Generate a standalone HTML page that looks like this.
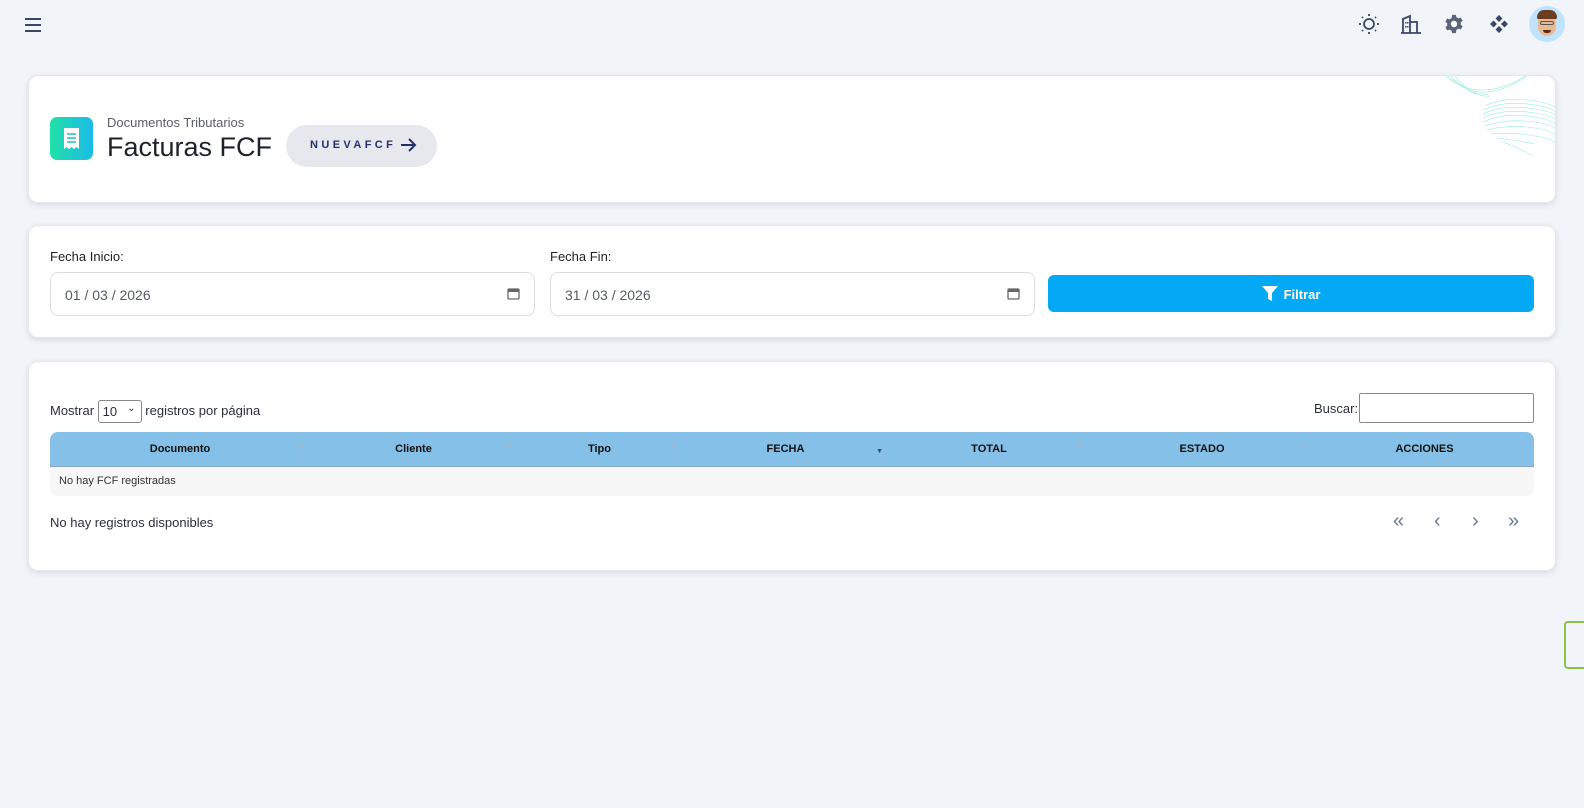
<!DOCTYPE html>
<html style="overflow:hidden;width:1584px;height:808px"><head><meta charset="utf-8">
<style>
*{box-sizing:border-box;margin:0;padding:0}
html,body{overflow:hidden}
body{width:1584px;height:808px;background:#f1f4f8;font-family:"Liberation Sans",sans-serif;color:#2b2f3a;position:relative}
.card{position:absolute;left:28px;width:1528px;background:#fff;border-radius:10px;box-shadow:0 2px 6px rgba(30,40,70,.12);border:1px solid #e3e6ec}
.ic{position:absolute;top:13px}
.inp{position:absolute;top:272px;height:44px;border:1px solid #d9dde3;border-radius:8px;background:#fff;font-size:14px;color:#555b66;padding:14px 0 0 14px}
.cal{position:absolute;right:14px;top:14px}
.lbl{position:absolute;top:249px;font-size:13px;color:#222}
th{font-size:11px;font-weight:bold;color:#111;height:34px;position:relative}
.so{position:absolute;right:6px;top:11px;font-size:7px;line-height:6px;color:#9bb8d0}
</style></head><body>
<svg style="position:absolute;left:24px;top:17px" width="18" height="15"><g stroke="#3a4666" stroke-width="2"><line x1="1" y1="2" x2="17" y2="2"/><line x1="1" y1="8" x2="17" y2="8"/><line x1="1" y1="14" x2="17" y2="14"/></g></svg>
<svg class="ic" style="left:1358px" width="22" height="22" viewBox="0 0 22 22"><circle cx="11" cy="11" r="5" fill="none" stroke="#3a4666" stroke-width="1.8"/><g stroke="#3a4666" stroke-width="1.8"><line x1="11" y1="1" x2="11" y2="3"/><line x1="11" y1="19" x2="11" y2="21"/><line x1="1" y1="11" x2="3" y2="11"/><line x1="19" y1="11" x2="21" y2="11"/><line x1="4" y1="4" x2="5" y2="5"/><line x1="17" y1="17" x2="18" y2="18"/><line x1="4" y1="18" x2="5" y2="17"/><line x1="17" y1="5" x2="18" y2="4"/></g></svg>
<svg class="ic" style="left:1400px" width="22" height="22" viewBox="0 0 22 22"><g fill="none" stroke="#3a4666" stroke-width="1.8"><path d="M1 20H21M3 20V6L10 3V20M10 9H17V20"/></g><g fill="#3a4666"><rect x="5" y="9" width="1.5" height="1.5"/><rect x="7" y="9" width="1.5" height="1.5"/><rect x="5" y="13" width="1.5" height="1.5"/><rect x="7" y="13" width="1.5" height="1.5"/></g></svg>
<svg class="ic" style="left:1443px" width="22" height="22" viewBox="0 0 24 24"><path d="M10 2h4l.6 2.6 2.3 1.3 2.5-.9 2 3.4-2 1.8v2.6l2 1.8-2 3.4-2.5-.9-2.3 1.3L14 22h-4l-.6-2.6-2.3-1.3-2.5.9-2-3.4 2-1.8V11.2l-2-1.8 2-3.4 2.5.9 2.3-1.3z" fill="#5a6377"/><circle cx="12" cy="12" r="3.5" fill="#fff"/></svg>
<svg class="ic" style="left:1488px" width="22" height="22" viewBox="0 0 22 22"><g fill="#3a4666"><path d="M11 2l3.5 3.5-3.5 3.5-3.5-3.5z"/><path d="M11 13l3.5 3.5-3.5 3.5-3.5-3.5z"/><path d="M5.5 7.5l3.5 3.5-3.5 3.5-3.5-3.5z"/><path d="M16.5 7.5l3.5 3.5-3.5 3.5-3.5-3.5z"/></g></svg>
<div style="position:absolute;left:1529px;top:6px;width:36px;height:36px;border-radius:50%;background:#bfe3fb;overflow:hidden"><div style="position:absolute;left:9px;top:6px;width:18px;height:24px;border-radius:9px;background:#e9b894"></div><div style="position:absolute;left:8px;top:4px;width:20px;height:9px;border-radius:8px 8px 2px 2px;background:#6b3e24"></div><div style="position:absolute;left:11px;top:15px;width:14px;height:4px;border:1px solid #555;border-radius:2px"></div><div style="position:absolute;left:14px;top:24px;width:8px;height:3px;background:#5a2a1a;border-radius:0 0 4px 4px"></div></div>

<div class="card" style="top:75px;height:128px;overflow:hidden">
<svg style="position:absolute;right:0;top:0" width="110" height="90" viewBox="0 0 110 90"><g fill="none" stroke="#7fe8cf" stroke-width=".6" opacity=".8">
<path d="M0 0 Q20 15 40 14 T80 0"/><path d="M3 0 Q22 18 42 16 T82 0"/><path d="M6 0 Q24 20 44 18"/><path d="M10 0 Q26 22 46 20"/>
<path d="M40 30 Q60 20 90 25 T110 40"/><path d="M38 34 Q60 24 90 29 T110 44"/><path d="M38 38 Q58 28 90 33 T110 48"/><path d="M38 42 Q58 32 90 37 T110 52"/><path d="M38 46 Q60 36 90 41 T110 56"/><path d="M40 50 Q62 42 90 46 T110 60"/><path d="M42 54 Q64 48 90 52 T110 64"/><path d="M46 58 Q68 56 90 60 T110 68"/><path d="M52 62 Q70 64 90 68"/><path d="M58 66 Q74 72 88 80"/>
</g></svg>
<div style="position:absolute;left:21px;top:41px;width:43px;height:43px;border-radius:7px;background:linear-gradient(90deg,#21e0a6,#1bbbe9)"><svg style="position:absolute;left:13px;top:10px" width="17" height="23" viewBox="0 0 17 23"><path d="M1 1h15v21l-2.5-2-2.5 2-2.5-2-2.5 2-2.5-2L1 22z" fill="#fff"/><g stroke="#2bc7c4" stroke-width="1.6"><line x1="4" y1="7" x2="13" y2="7"/><line x1="4" y1="11" x2="13" y2="11"/><line x1="4" y1="15" x2="13" y2="15"/></g></svg></div>
<div style="position:absolute;left:78px;top:39px;font-size:13px;color:#5b5e66">Documentos Tributarios</div>
<div style="position:absolute;left:78px;top:56px;font-size:27px;color:#1e222a">Facturas FCF</div>
<div style="position:absolute;left:257px;top:49px;width:151px;height:42px;border-radius:21px;background:#e7e8ee;color:#24306a;font-size:11px;font-weight:bold;letter-spacing:3.4px;padding:14px 0 0 24px">NUEVAFCF<svg style="position:absolute;left:114px;top:12px" width="17" height="16" viewBox="0 0 17 16"><path d="M1 8H15M9 2l6 6-6 6" fill="none" stroke="#24306a" stroke-width="2"/></svg></div>
</div>

<div class="card" style="top:225px;height:113px"></div>
<div class="lbl" style="left:50px">Fecha Inicio:</div>
<div class="lbl" style="left:550px">Fecha Fin:</div>
<div class="inp" style="left:50px;width:485px">01 / 03 / 2026<svg class="cal" width="13" height="13" viewBox="0 0 13 13"><rect x="1" y="2" width="11" height="10" rx="1" fill="none" stroke="#666" stroke-width="1.3"/><rect x="1" y="2" width="11" height="3" fill="#666"/></svg></div>
<div class="inp" style="left:550px;width:485px">31 / 03 / 2026<svg class="cal" width="13" height="13" viewBox="0 0 13 13"><rect x="1" y="2" width="11" height="10" rx="1" fill="none" stroke="#666" stroke-width="1.3"/><rect x="1" y="2" width="11" height="3" fill="#666"/></svg></div>
<div style="position:absolute;left:1048px;top:275px;width:486px;height:37px;border-radius:6px;background:#03a9f4;color:#fff;font-size:13px;font-weight:bold;text-align:center;padding-top:11px"><svg width="16" height="15" viewBox="0 0 16 15" style="vertical-align:-2px;margin-right:6px"><path d="M0 0H16L10 7V15L6 13V7Z" fill="#fff"/></svg>Filtrar</div>

<div class="card" style="top:361px;height:210px"></div>
<div style="position:absolute;left:50px;top:400px;font-size:13px">Mostrar <span style="display:inline-block;width:44px;height:23px;border:1px solid #888;border-radius:3px;vertical-align:middle;padding:3px 4px;position:relative">10<span style="position:absolute;right:5px;top:2px;font-size:10px">⌄</span></span> registros por página</div>
<div style="position:absolute;left:1314px;top:401px;font-size:13px">Buscar:</div>
<div style="position:absolute;left:1359px;top:393px;width:175px;height:30px;border:1px solid #888;border-radius:2px;background:#fff"></div>
<table style="position:absolute;left:50px;top:432px;width:1484px;border-collapse:collapse">
<tr style="background:#85c0e8">
<th style="width:260px;border-radius:8px 0 0 0">Documento<span class="so">▲<br>▼</span></th>
<th style="width:207px">Cliente<span class="so">▲<br>▼</span></th>
<th style="width:165px">Tipo<span class="so">▲<br>▼</span></th>
<th style="width:207px">FECHA<span class="so" style="color:#39465a;top:17px">▼</span></th>
<th style="width:200px">TOTAL<span class="so">▲<br>▼</span></th>
<th style="width:226px">ESTADO<span class="so">▲<br>▼</span></th>
<th style="border-radius:0 8px 0 0">ACCIONES</th></tr>
<tr style="background:#f7f7f8"><td colspan="7" style="height:30px;font-size:11px;color:#333;padding-left:9px;border-top:1px solid #8aa6c0;border-radius:0 0 8px 8px">No hay FCF registradas</td></tr>
</table>
<div style="position:absolute;left:50px;top:515px;font-size:13px">No hay registros disponibles</div>
<div style="position:absolute;left:1393px;top:510px;font-size:20px;color:#6b7a90">
<span style="position:absolute;left:0">«</span><span style="position:absolute;left:41px">‹</span><span style="position:absolute;left:79px">›</span><span style="position:absolute;left:115px">»</span></div>
<div style="position:absolute;left:1564px;top:621px;width:20px;height:48px;border:2px solid #8bc34a;border-right:none;border-radius:4px 0 0 4px"></div>
</body></html>
